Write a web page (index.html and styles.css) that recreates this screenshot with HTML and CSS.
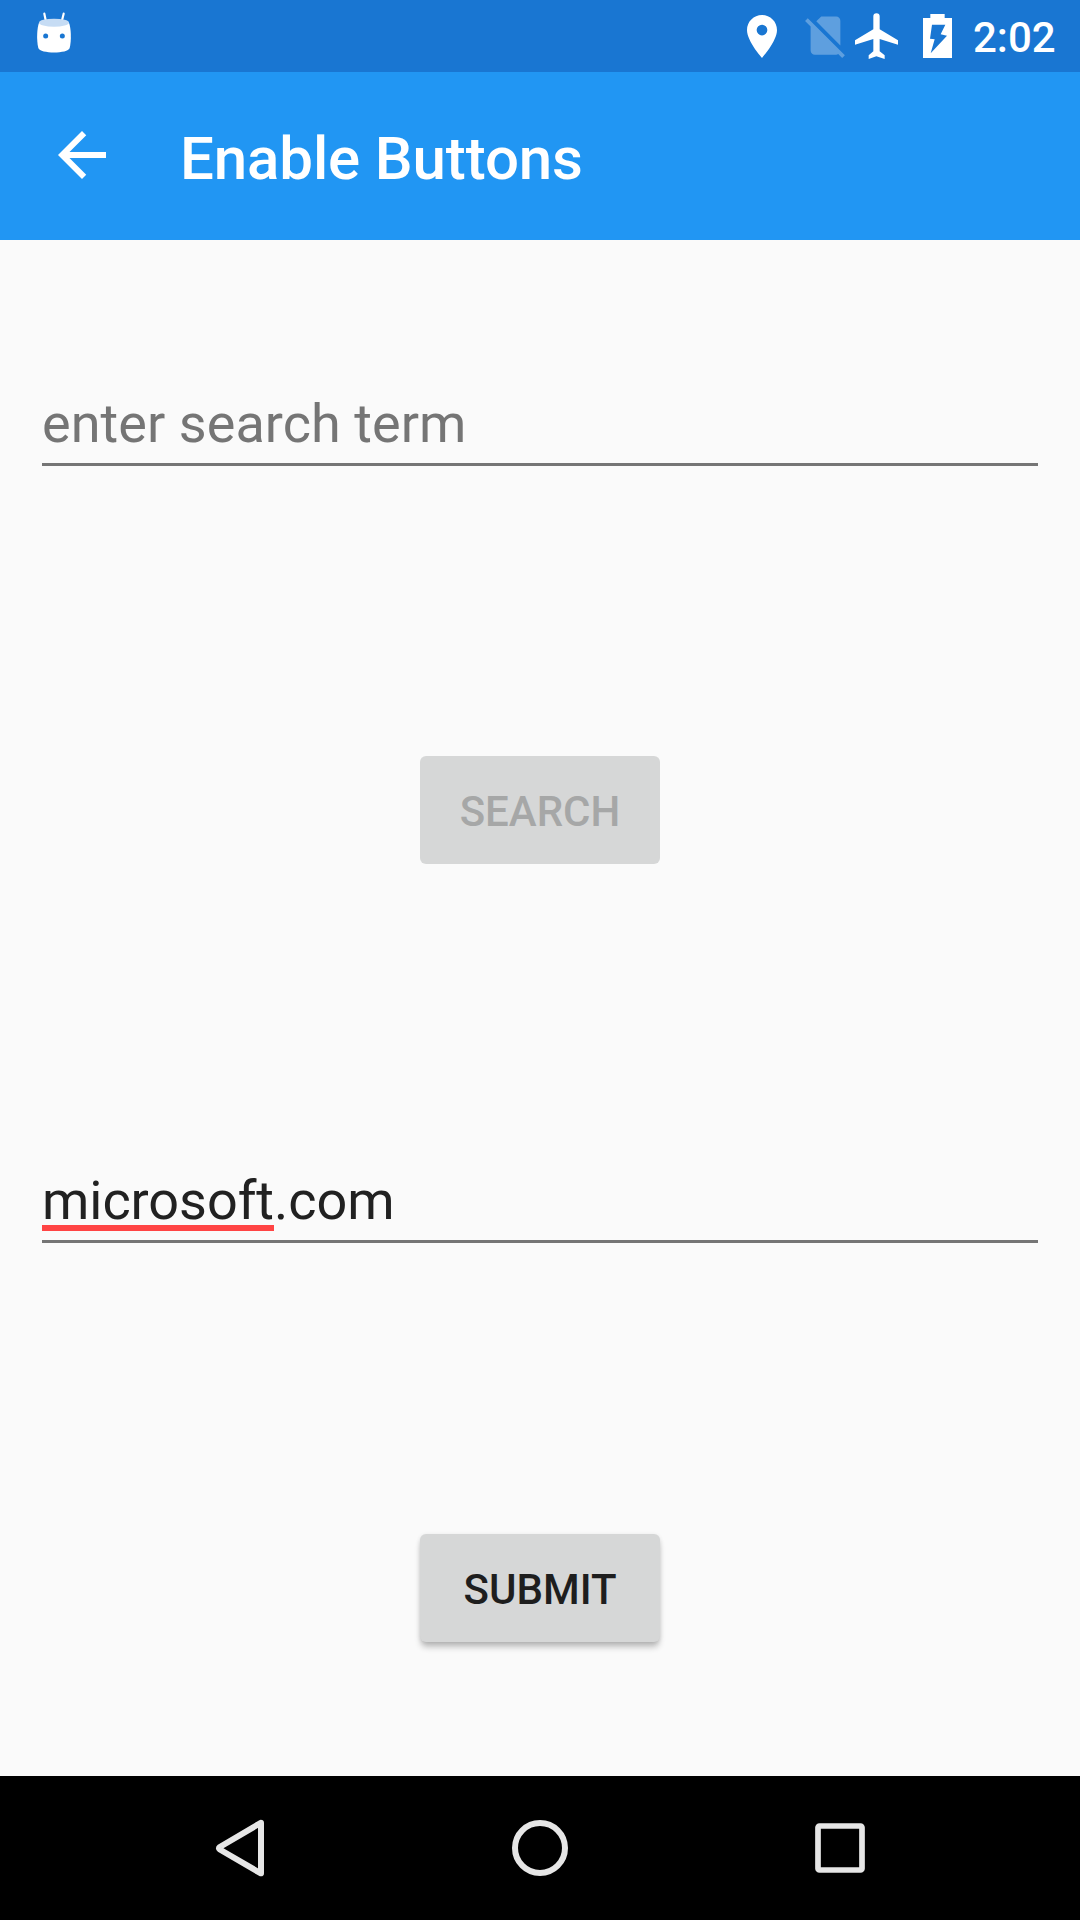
FILE: index.html
```html
<!DOCTYPE html>
<html lang="en">
<head>
<meta charset="utf-8">
<title>Enable Buttons</title>
<link rel="stylesheet" href="styles.css">
</head>
<body>
<div class="screen">
  <div class="status-bar">
    <svg class="icon-android" viewBox="48 36 108 126">
      <path d="M73 41l5 24M131 41l-6 24" fill="none" stroke="#fff" stroke-width="6.5" stroke-linecap="round"/>
      <path d="M57 68C51 84 49 120 55 144C60 162 144 162 149 144C155 120 153 84 147 68Z" fill="#fff"/>
      <ellipse cx="102" cy="68" rx="45" ry="12" fill="#c6dcf4"/>
      <circle cx="77" cy="108" r="7.5" fill="#1976d2"/>
      <circle cx="127" cy="108" r="7.5" fill="#1976d2"/>
    </svg>
    <div class="status-icons">
      <svg class="icon-place" viewBox="5 2 14 20"><path fill="#fff" d="M12 2C8.13 2 5 5.13 5 9c0 5.25 7 13 7 13s7-7.75 7-13c0-3.87-3.13-7-7-7zm0 9.500a2.500 2.500 0 0 1 0-5 2.500 2.500 0 0 1 0 5z"/></svg>
      <svg class="icon-sim" viewBox="0 0 24 24"><path fill="#fff" fill-opacity=".3" d="M18.99 5c0-1.1-.89-2-1.99-2h-7L7.66 5.34 19 16.68 18.99 5zM3.65 3.88L2.38 5.15 5 7.77V19c0 1.1.9 2 2 2h10.01c.35 0 .67-.1.96-.26l1.88 1.88 1.27-1.27L3.65 3.88z"/></svg>
      <svg class="icon-plane" viewBox="375 39 129 138"><path fill="#fff" d="M430 49a9.500 9.500 0 0 1 19 0V88L504 121V134L449 117V154L464 166V177L439 169L416 177V166L430 154V117L375 134V121L430 88Z"/></svg>
      <svg class="icon-battery" viewBox="69 42 87 132"><path fill="#fff" fill-rule="evenodd" d="M91 42H134V54H156V174H69V54H91ZM96 74L90 116L104 118L92 160L141 107L122 103L136 74Z"/></svg>
      <span class="clock">2:02</span>
    </div>
  </div>
  <header class="app-bar">
    <svg class="icon-back" viewBox="0 0 24 24"><path fill="#fff" d="M20 11H7.83l5.59-5.59L12 4l-8 8 8 8 1.41-1.41L7.83 13H20v-2z"/></svg>
    <h1 class="title">Enable Buttons</h1>
  </header>
  <main class="content">
    <div class="field field-hint">enter search term</div>
    <button class="button button-disabled" disabled>SEARCH</button>
    <div class="field field-value"><span class="misspelled">microsoft</span>.com</div>
    <button class="button button-raised">SUBMIT</button>
  </main>
  <nav class="nav-bar">
    <svg class="nav-icon" viewBox="0 0 60 60"><path d="M51 4.800V55.200Q51 55.500 50.500 55.200L9.800 31.500Q8 30.300 9.800 29L50.500 5Q51 4.500 51 4.800Z" fill="none" stroke="#e6e6e6" stroke-width="6" stroke-linejoin="round"/></svg>
    <svg class="nav-icon" viewBox="0 0 60 60"><circle cx="30" cy="30" r="25" fill="none" stroke="#e6e6e6" stroke-width="6"/></svg>
    <svg class="nav-icon" viewBox="0 0 60 60"><rect x="8" y="8" width="44" height="44" rx="1.500" fill="none" stroke="#e6e6e6" stroke-width="5.700"/></svg>
  </nav>
</div>
</body>
</html>
```
FILE: styles.css
```css
body {
  margin: 0;
  font-family: Roboto, sans-serif;
}

.screen {
  display: flex;
  flex-direction: column;
  width: 1080px;
  height: 1920px;
  background: #fafafa;
  overflow: hidden;
}

svg {
  display: block;
  flex: none;
}

.status-bar {
  display: flex;
  justify-content: space-between;
  align-items: flex-start;
  height: 72px;
  padding: 0 24px 0 36px;
  box-sizing: border-box;
  background: #1976d2;
}

.icon-android {
  width: 36px;
  height: 42px;
  margin-top: 12px;
}

.status-icons {
  display: flex;
  align-items: flex-start;
}

.icon-place {
  width: 30px;
  height: 43px;
  margin: 15px 23px 0 0;
}

.icon-sim {
  width: 51px;
  height: 51px;
  margin: 9.600px 4px 0 0;
}

.icon-plane {
  width: 43px;
  height: 46px;
  margin: 13px 25px 0 0;
}

.icon-battery {
  width: 29px;
  height: 44px;
  margin: 14px 21px 0 0;
}

.clock {
  width: 83px;
  margin-top: 13px;
  font-size: 42px;
  font-weight: 500;
  line-height: 50px;
  color: #fff;
}

.app-bar {
  display: flex;
  align-items: flex-start;
  height: 168px;
  padding-left: 46px;
  box-sizing: border-box;
  background: #2196f3;
}

.icon-back {
  width: 72px;
  height: 72px;
  margin-top: 47px;
}

.title {
  margin: 51px 0 0 62px;
  font-size: 60px;
  font-weight: 500;
  line-height: 72px;
  letter-spacing: -.12px;
  color: #fff;
}

.content {
  display: flex;
  flex: 1;
  flex-direction: column;
  align-items: center;
  padding: 152px 42px 0;
}

.field {
  width: 100%;
  height: 71px;
  border-bottom: 3px solid #757575;
  font-size: 54px;
  line-height: 64px;
}

.field-hint {
  color: #757575;
  letter-spacing: .06px;
}

.field-value {
  margin-top: 305px;
  color: #212121;
  letter-spacing: -.05px;
}

.misspelled {
  display: inline-block;
  height: 62px;
  border-bottom: 6px solid #ff4444;
  vertical-align: top;
  box-sizing: border-box;
}

.button {
  width: 240px;
  height: 108px;
  margin-top: 290px;
  padding: 3px 0 0;
  border: 0;
  border-radius: 6px;
  background: #d6d7d7;
  font: 500 42px/50px Roboto, sans-serif;
}

.button-disabled {
  color: #a6a7a7;
}

.button-raised {
  margin-top: 291px;
  color: #1e1e1e;
  box-shadow: 0 6px 6px -1px rgba(0, 0, 0, .24), 0 1px 4px rgba(0, 0, 0, .1);
}

.nav-bar {
  display: flex;
  justify-content: space-around;
  align-items: center;
  height: 144px;
  padding: 0 90px;
  background: #000;
}

.nav-icon {
  width: 60px;
  height: 60px;
}
```
